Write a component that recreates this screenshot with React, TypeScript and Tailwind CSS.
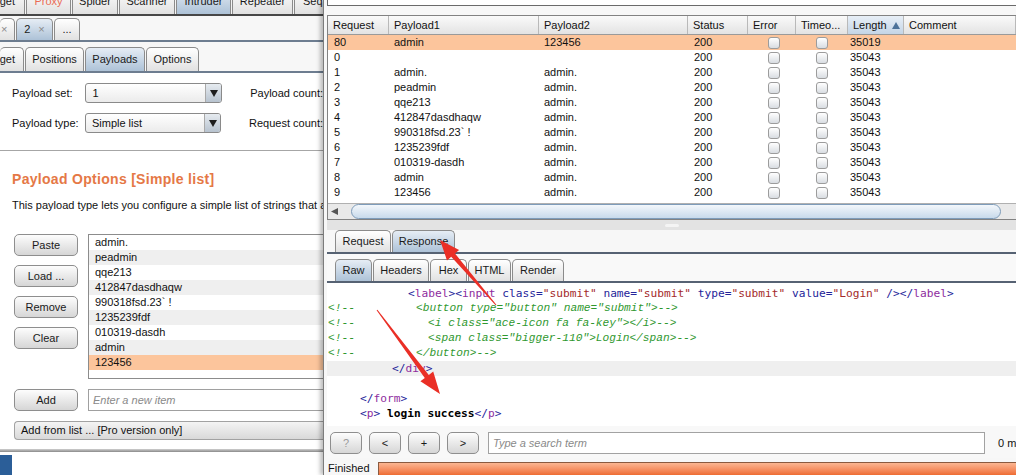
import React from 'react';

type TabProps = { children: React.ReactNode; active?: boolean; className?: string };

const Tab = ({ children, active = false, className = '' }: TabProps) => (
  <div
    className={`flex shrink-0 items-center justify-center rounded-t-[5px] border border-b-0 border-[#8b8b8b] text-[11px] text-[#1a1a1a] ${
      active ? 'bg-linear-to-b from-[#e6edf5] to-[#adc2d7]' : 'bg-linear-to-b from-white to-[#e1e1e1]'
    } ${className}`}
  >
    {children}
  </div>
);

const Btn = ({ children, className = '' }: { children: React.ReactNode; className?: string }) => (
  <div
    className={`flex shrink-0 items-center justify-center rounded-[5px] border border-[#8e8e8e] bg-linear-to-b from-[#fdfdfd] to-[#d6d6d6] text-[11px] text-[#1a1a1a] ${className}`}
  >
    {children}
  </div>
);

const Arrow = () => (
  <svg width="8" height="7" viewBox="0 0 8 7">
    <polygon points="0,0 8,0 4,7" fill="#1e1e1e" />
  </svg>
);

const Select = ({ value }: { value: string }) => (
  <div className="flex h-[20px] w-[138px] overflow-hidden rounded-[3px] border border-[#8a8a8a] bg-linear-to-b from-white to-[#ebebeb]">
    <div className="flex flex-1 items-center pl-[6px] text-[11px] text-[#111]">{value}</div>
    <div className="flex w-[16px] items-center justify-center border-l border-[#a9a9a9] bg-linear-to-b from-[#e6ebf0] to-[#b8c3cf]">
      <Arrow />
    </div>
  </div>
);

const Check = () => (
  <div className="h-[12px] w-[12px] rounded-[3px] border border-[#9c9c9c] bg-linear-to-b from-white to-[#d9dde2]" />
);

const payloads = ['admin.', 'peadmin', 'qqe213', '412847dasdhaqw', '990318fsd.23` !', '1235239fdf', '010319-dasdh', 'admin', '123456'];

const results = [
  ['80', 'admin', '123456', '35019'],
  ['0', '', '', '35043'],
  ['1', 'admin.', 'admin.', '35043'],
  ['2', 'peadmin', 'admin.', '35043'],
  ['3', 'qqe213', 'admin.', '35043'],
  ['4', '412847dasdhaqw', 'admin.', '35043'],
  ['5', '990318fsd.23` !', 'admin.', '35043'],
  ['6', '1235239fdf', 'admin.', '35043'],
  ['7', '010319-dasdh', 'admin.', '35043'],
  ['8', 'admin', 'admin.', '35043'],
  ['9', '123456', 'admin.', '35043'],
];

const B = ({ children }: { children: React.ReactNode }) => <span className="text-[#25259a]">{children}</span>;
const T = ({ children }: { children: React.ReactNode }) => <span className="text-[#8e2c9e]">{children}</span>;
const V = ({ children }: { children: React.ReactNode }) => <span className="text-[#a42a2a]">{children}</span>;

const LeftPane = () => (
  <div className="flex h-[452px] w-[323px] shrink-0 flex-col bg-white">
    {/* main tool tabs, cut at the top */}
    <div className="flex h-[16px] gap-[1px] overflow-hidden border-b-2 border-[#474747] bg-[#f4f4f4]">
      <Tab className="-mt-[13px] h-[27px] w-[25px] justify-end border-l-0 pr-[9px]">get</Tab>
      <Tab className="-mt-[13px] h-[27px] w-[45px] text-[#ea6b55]">Proxy</Tab>
      <Tab className="-mt-[13px] h-[27px] w-[46px]">Spider</Tab>
      <Tab className="-mt-[13px] h-[27px] w-[56px]">Scanner</Tab>
      <Tab active className="-mt-[13px] h-[27px] w-[55px]">Intruder</Tab>
      <Tab className="-mt-[13px] h-[27px] w-[61px]">Repeater</Tab>
      <Tab className="-mt-[13px] h-[27px] w-[40px] justify-start pl-[8px]">Seq</Tab>
    </div>
    <div className="flex h-[26px] items-end gap-[1px] border-b-2 border-[#6d7d90] bg-[#f7f7f7]">
      <Tab className="h-[22px] w-[15px] justify-start border-l-0 pl-[1px] text-[#8a8a8a]">×</Tab>
      <Tab active className="h-[22px] w-[37px] gap-[8px]">
        <span>2</span>
        <span className="text-[#8a8a8a]">×</span>
      </Tab>
      <Tab className="h-[22px] w-[26px]">...</Tab>
    </div>
    <div className="flex h-[31px] items-end gap-[1px] border-b-2 border-[#6d7d90] bg-[#f7f7f7]">
      <Tab className="h-[24px] w-[24px] justify-end border-l-0 pr-[8px]">get</Tab>
      <Tab className="h-[24px] w-[59px]">Positions</Tab>
      <Tab active className="h-[24px] w-[60px]">Payloads</Tab>
      <Tab className="h-[24px] w-[53px]">Options</Tab>
    </div>

    <div className="flex flex-1 flex-col text-[11px] text-[#111]">
      <div className="flex flex-col gap-[10px] pl-[12px] pt-[10px]">
        <div className="flex h-[20px] items-center">
          <span className="w-[74px]">Payload set:</span>
          <Select value="1" />
          <span className="ml-[28px] whitespace-nowrap">Payload count:</span>
        </div>
        <div className="flex h-[20px] items-center">
          <span className="w-[74px]">Payload type:</span>
          <Select value="Simple list" />
          <span className="ml-[28px] whitespace-nowrap">Request count:</span>
        </div>
      </div>
      <div className="mt-[17px] h-px bg-[#a6a6a6]" />
      <div className="mt-[20px] h-[16px] pl-[12px] text-[14px] font-bold leading-[16px] tracking-[0.3px] text-[#e57846]">
        Payload Options [Simple list]
      </div>
      <div className="mt-[11px] h-[14px] whitespace-nowrap pl-[12px] leading-[14px]">
        This payload type lets you configure a simple list of strings that a
      </div>

      <div className="mt-[22px] flex pl-[14px]">
        <div className="flex w-[64px] flex-col gap-[9px]">
          <Btn className="h-[22px]">Paste</Btn>
          <Btn className="h-[22px]">Load ...</Btn>
          <Btn className="h-[22px]">Remove</Btn>
          <Btn className="h-[22px]">Clear</Btn>
        </div>
        <div className="ml-[10px] h-[145px] flex-1 border border-r-0 border-[#8c8c8c] bg-white">
          {payloads.map((p, i) => (
            <div
              key={i}
              className={`h-[15px] pl-[6px] leading-[15px] ${
                i === payloads.length - 1 ? 'bg-[#fcc59c]' : i % 2 === 1 ? 'bg-[#efefef]' : 'bg-white'
              }`}
            >
              {p}
            </div>
          ))}
        </div>
      </div>

      <div className="mt-[10px] flex pl-[14px]">
        <Btn className="h-[22px] w-[64px]">Add</Btn>
        <div className="ml-[10px] flex h-[22px] flex-1 items-center border border-r-0 border-[#a0a0a0] bg-white pl-[4px] italic text-[#8a8a8a]">
          Enter a new item
        </div>
      </div>
      <div className="ml-[14px] mt-[10px] flex h-[19px] items-center rounded-l-[4px] border border-r-0 border-[#a2a2a2] bg-linear-to-b from-[#f4f4f4] to-[#d9d9d9] pl-[6px]">
        Add from list ... [Pro version only]
      </div>
    </div>
    <div className="h-[3px] bg-linear-to-b from-[#d0d0d0] to-[#8a8a8a]" />
  </div>
);

const cols = ['w-[61px]', 'w-[150px]', 'w-[149px]', 'w-[60px]', 'w-[48px]', 'w-[52px]', 'w-[56px]', 'flex-1'];
const heads = ['Request', 'Payload1', 'Payload2', 'Status', 'Error', 'Timeo...', 'Length', 'Comment'];

const ResultsTable = () => (
  <div className="mt-[9px] flex flex-col border border-r-0 border-[#828282] bg-white text-[11px] text-[#111]">
    <div className="flex h-[19px] border-b border-[#9a9a9a] bg-linear-to-b from-[#fafafa] to-[#e3e3e3]">
      {heads.map((h, i) => (
        <div
          key={h}
          className={`flex shrink-0 items-center border-r border-[#b9b9b9] pl-[5px] ${cols[i]} ${
            i === 6 ? 'bg-linear-to-b from-[#e8eff7] to-[#c4d5e6]' : ''
          }`}
        >
          {h}
          {i === 6 && (
            <svg className="ml-[5px]" width="8" height="7" viewBox="0 0 8 7">
              <polygon points="4,0 8,7 0,7" fill="#4d7299" />
            </svg>
          )}
        </div>
      ))}
    </div>
    {results.map((r, i) => (
      <div key={i} className={`flex h-[15px] items-center ${i === 0 ? 'bg-[#fcc59c]' : 'bg-white'}`}>
        <div className={`${cols[0]} shrink-0 pl-[6px]`}>{r[0]}</div>
        <div className={`${cols[1]} shrink-0 pl-[5px]`}>{r[1]}</div>
        <div className={`${cols[2]} shrink-0 pl-[5px]`}>{r[2]}</div>
        <div className={`${cols[3]} shrink-0 pl-[6px]`}>200</div>
        <div className={`${cols[4]} flex shrink-0 justify-center pl-[4px]`}>
          <Check />
        </div>
        <div className={`${cols[5]} flex shrink-0 justify-center`}>
          <Check />
        </div>
        <div className={`${cols[6]} shrink-0 pl-[2px]`}>{r[3]}</div>
        <div className="flex-1" />
      </div>
    ))}
    <div className="mt-[3px] flex h-[16px] items-center border-t border-[#b0b0b0] bg-[#e9e9e9]">
      <svg className="ml-[3px]" width="7" height="7" viewBox="0 0 7 7">
        <polygon points="0,3.5 7,0 7,7" fill="#555" />
      </svg>
      <div className="ml-[13px] h-[15px] w-[650px] rounded-[8px] border border-[#7e9cba] bg-linear-to-b from-[#f3f7fb] to-[#c8daeb]" />
    </div>
  </div>
);

const comment = "h-[15px] whitespace-pre pl-[1px] font-['Liberation_Mono','DejaVu_Sans_Mono',monospace] italic text-[#2f982f]";

const Code = () => (
  <div className="h-[143px] bg-white pt-[3px] font-['DejaVu_Sans_Mono',monospace] text-[11.2px] leading-[15px]">
    <div className="h-[15px] whitespace-pre pl-[81px]">
      <B>&lt;</B>
      <T>label</T>
      <B>&gt;&lt;</B>
      <T>input</T>
      <B> class=</B>
      <V>"submit"</V>
      <B> name=</B>
      <V>"submit"</V>
      <B> type=</B>
      <V>"submit"</V>
      <B> value=</B>
      <V>"Login"</V>
      <B> /&gt;&lt;/</B>
      <T>label</T>
      <B>&gt;</B>
    </div>
    <div className={comment}>
      <span className="inline-block w-[88px]">&lt;!--</span>&lt;button type="button" name="submit"&gt;--&gt;
    </div>
    <div className={comment}>
      <span className="inline-block w-[100px]">&lt;!--</span>&lt;i class="ace-icon fa fa-key"&gt;&lt;/i&gt;--&gt;
    </div>
    <div className={comment}>
      <span className="inline-block w-[100px]">&lt;!--</span>&lt;span class="bigger-110"&gt;Login&lt;/span&gt;--&gt;
    </div>
    <div className={comment}>
      <span className="inline-block w-[88px]">&lt;!--</span>&lt;/button&gt;--&gt;
    </div>
    <div className="h-[15px] whitespace-pre bg-[#efefef] pl-[65px]">
      <B>&lt;/</B>
      <T>div</T>
      <B>&gt;</B>
    </div>
    <div className="h-[15px]" />
    <div className="h-[15px] whitespace-pre pl-[33px]">
      <B>&lt;/</B>
      <T>form</T>
      <B>&gt;</B>
    </div>
    <div className="h-[15px] whitespace-pre pl-[33px]">
      <B>&lt;</B>
      <T>p</T>
      <B>&gt;</B>
      <span className="font-bold text-black"> login success</span>
      <B>&lt;/</B>
      <T>p</T>
      <B>&gt;</B>
    </div>
  </div>
);

const RightPane = () => (
  <div className="flex h-[475px] flex-1 flex-col border-l border-[#7c7c7c] bg-[#f7f7f7] pl-[3px] shadow-[-3px_0_4px_rgba(0,0,0,0.25)] font-['Liberation_Sans',Arial,sans-serif]">
    <div className="h-[6px] border-b border-l border-[#6a6a6a] bg-white" />
    <ResultsTable />
    <div className="flex h-[10px] items-center justify-center bg-[#e3e3e3]">
      <div className="h-[3px] w-[14px] rounded-full bg-[#f4f4f4]" />
    </div>
    <div className="flex h-[24px] items-end gap-[1px] border-b-2 border-[#566273] pl-[8px]">
      <Tab className="h-[22px] w-[56px]">Request</Tab>
      <Tab active className="h-[22px] w-[63px]">Response</Tab>
    </div>
    <div className="flex h-[29px] items-end gap-[1px] border-b-2 border-[#566273] bg-[#f9f9f9] pl-[8px]">
      <Tab active className="h-[22px] w-[37px]">Raw</Tab>
      <Tab className="h-[22px] w-[56px]">Headers</Tab>
      <Tab className="h-[22px] w-[37px]">Hex</Tab>
      <Tab className="h-[22px] w-[43px]">HTML</Tab>
      <Tab className="h-[22px] w-[52px]">Render</Tab>
    </div>
    <Code />
    <div className="flex h-[32px] items-start bg-[#f8f8f8] pl-[3px] pt-[6px] text-[11px] text-[#111]">
      <Btn className="h-[22px] w-[32px] text-[#9a9a9a]">?</Btn>
      <Btn className="ml-[7px] h-[22px] w-[32px]">&lt;</Btn>
      <Btn className="ml-[7px] h-[22px] w-[32px]">+</Btn>
      <Btn className="ml-[7px] h-[22px] w-[32px]">&gt;</Btn>
      <div className="ml-[9px] flex h-[22px] w-[497px] items-center border border-[#a2a2a2] bg-white pl-[4px] italic text-[#8a8a8a]">
        Type a search term
      </div>
      <span className="ml-[13px] flex h-[22px] items-center whitespace-nowrap">0 m</span>
    </div>
    <div className="flex h-[17px] items-end text-[11px] text-[#111]">
      <span className="mb-[-1px] w-[51px] pl-[1px]">Finished</span>
      <div className="h-[13px] flex-1 border-l border-t border-[#8a5a40] bg-linear-to-b from-[#fbb692] to-[#ee6c32]" />
    </div>
  </div>
);

export default function App() {
  return (
    <div className="relative flex h-[475px] w-[1016px] overflow-hidden bg-white font-['Liberation_Sans',Arial,sans-serif]">
      <div className="flex w-[323px] shrink-0 flex-col">
        <LeftPane />
        <div className="flex flex-1">
          <div className="mt-[3px] w-[12px] bg-[#2b5e98]" />
          <div className="flex-1 bg-white" />
        </div>
      </div>
      <RightPane />
      {/* red annotation arrows */}
      <svg className="pointer-events-none absolute left-0 top-0" width="1016" height="475">
        <polygon
          points="496.4,304.7 455,253.5 459.1,249.9 440,240 447,260.4 451.2,256.8 495.6,305.3"
          fill="#ea2f26"
        />
        <polygon
          points="376.6,310.3 424.8,377.9 420.4,381.2 440,394 433.2,371.6 428.8,374.9 377.4,309.7"
          fill="#ea2f26"
        />
      </svg>
    </div>
  );
}
